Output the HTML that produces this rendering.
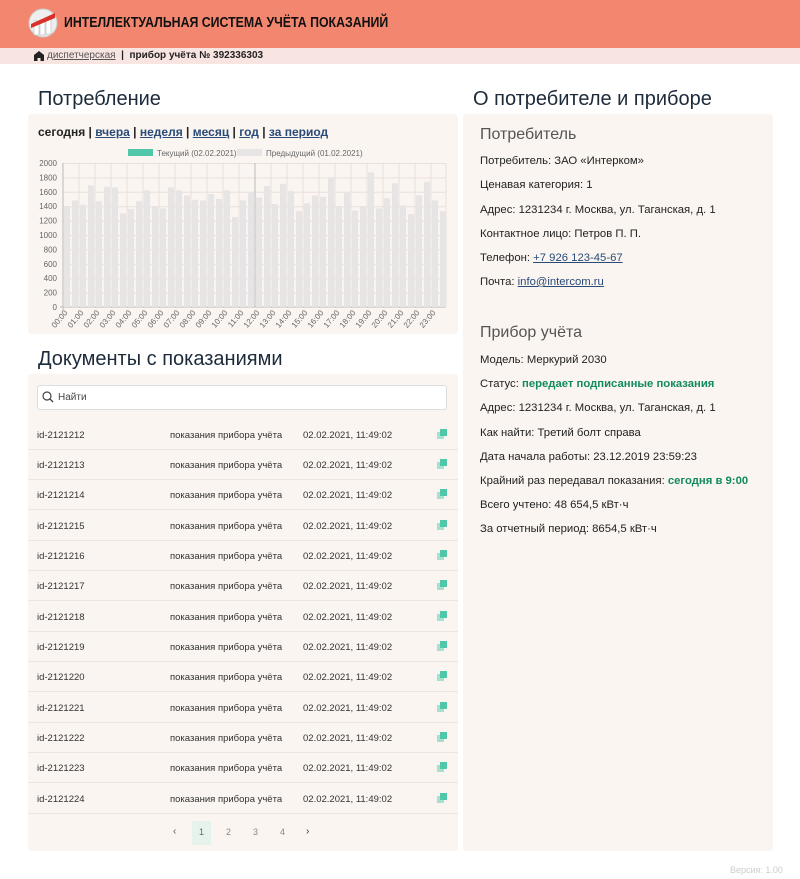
<!DOCTYPE html>
<html><head><meta charset="utf-8">
<style>
*{margin:0;padding:0;box-sizing:border-box}
body{width:800px;height:879px;background:#fff;font-family:"Liberation Sans",sans-serif;color:#222;position:relative;overflow:hidden}
.a{position:absolute;white-space:nowrap}
.hdr{left:0;top:0;width:800px;height:48px;background:#f2866e}
.bc{left:0;top:48px;width:800px;height:16px;background:#f8e4e0;font-size:10px}
.panel{background:#faf5f0;border-radius:3px}
h2{font-weight:normal;font-size:20px;color:#1c2a3a}
a{color:#2a4a78}
.row{left:28px;width:430px;height:30px;border-bottom:1px solid #ece6e0;font-size:9.5px;color:#333}
.row span{position:absolute;top:10px}
.ri{font-size:11.3px;left:480px;color:#222}
.g{color:#138a5e;font-weight:bold}
</style></head><body>
<div class="a hdr"></div>
<svg class="a" style="left:28px;top:8px" width="30" height="30" viewBox="0 0 30 30">
<circle cx="15" cy="15" r="14" fill="#eee" stroke="#ccc"/>
<rect x="6" y="13" width="5" height="14" fill="#fff" stroke="#bbb" stroke-width=".6"/>
<rect x="12" y="12" width="5" height="15" fill="#fff" stroke="#bbb" stroke-width=".6"/>
<rect x="18" y="11" width="5" height="15" fill="#fff" stroke="#bbb" stroke-width=".6"/>
<path d="M3 16 L27 5 L27 10 L3 20Z" fill="#d9302a"/>
</svg>
<div class="a" style="left:64px;top:15px;font-size:14.5px;font-weight:bold;color:#111;transform:scaleX(0.85);transform-origin:left">ИНТЕЛЛЕКТУАЛЬНАЯ СИСТЕМА УЧЁТА ПОКАЗАНИЙ</div>
<div class="a bc"></div>
<svg class="a" style="left:34px;top:51px" width="10" height="10" viewBox="0 0 10 10"><path d="M5 0L10 4V10H6.5V7H3.5V10H0V4Z" fill="#222"/></svg>
<div class="a" style="left:47px;top:50px;font-size:10px;color:#555"><span style="text-decoration:underline">диспетчерская</span> <b style="color:#222">&nbsp;|&nbsp; прибор учёта № 392336303</b></div>

<h2 class="a" style="left:38px;top:88px">Потребление</h2>
<h2 class="a" style="left:473px;top:88px">О потребителе и приборе</h2>

<div class="a panel" style="left:28px;top:114px;width:430px;height:220px"></div>
<div class="a" style="left:38px;top:125px;font-size:12px;font-weight:bold">сегодня | <a href="#">вчера</a> | <a href="#">неделя</a> | <a href="#">месяц</a> | <a href="#">год</a> | <a href="#">за период</a></div>

<svg class="a" style="left:28px;top:140px" width="430" height="195" viewBox="28 140 430 195" font-family="Liberation Sans" font-size="8" fill="#666">
<rect x="128" y="149" width="25" height="7" fill="#4fc7a8"/><text x="157" y="156">Текущий (02.02.2021)</text>
<rect x="237" y="149" width="25" height="7" fill="#e6e4e4"/><text x="266" y="156">Предыдущий (01.02.2021)</text>
<g stroke="#eadfdc" stroke-width="1">
<line x1="63" x2="446" y1="163.5" y2="163.5"/><line x1="63" x2="446" y1="177.9" y2="177.9"/><line x1="63" x2="446" y1="192.3" y2="192.3"/><line x1="63" x2="446" y1="206.7" y2="206.7"/><line x1="63" x2="446" y1="221.1" y2="221.1"/><line x1="63" x2="446" y1="235.5" y2="235.5"/><line x1="63" x2="446" y1="249.9" y2="249.9"/><line x1="63" x2="446" y1="264.3" y2="264.3"/><line x1="63" x2="446" y1="278.7" y2="278.7"/><line x1="63" x2="446" y1="293.1" y2="293.1"/>
<line x1="79" x2="79" y1="163" y2="307"/><line x1="95" x2="95" y1="163" y2="307"/><line x1="111" x2="111" y1="163" y2="307"/><line x1="127" x2="127" y1="163" y2="307"/><line x1="143" x2="143" y1="163" y2="307"/><line x1="159" x2="159" y1="163" y2="307"/><line x1="175" x2="175" y1="163" y2="307"/><line x1="191" x2="191" y1="163" y2="307"/><line x1="207" x2="207" y1="163" y2="307"/><line x1="223" x2="223" y1="163" y2="307"/><line x1="239" x2="239" y1="163" y2="307"/><line x1="271" x2="271" y1="163" y2="307"/><line x1="287" x2="287" y1="163" y2="307"/><line x1="303" x2="303" y1="163" y2="307"/><line x1="319" x2="319" y1="163" y2="307"/><line x1="335" x2="335" y1="163" y2="307"/><line x1="351" x2="351" y1="163" y2="307"/><line x1="367" x2="367" y1="163" y2="307"/><line x1="383" x2="383" y1="163" y2="307"/><line x1="399" x2="399" y1="163" y2="307"/><line x1="415" x2="415" y1="163" y2="307"/><line x1="431" x2="431" y1="163" y2="307"/><line x1="446" x2="446" y1="163" y2="307"/>
</g>
<line x1="255" x2="255" y1="163" y2="307" stroke="#bbb"/>
<line x1="63" x2="63" y1="163" y2="310" stroke="#bbb"/><line x1="60" x2="446" y1="307" y2="307" stroke="#bbb"/>
<g fill="#e6e4e4">
<rect x="64" y="206.2" width="6" height="100.8"/><rect x="72" y="200.4" width="6" height="106.6"/><rect x="80" y="204.8" width="6" height="102.2"/><rect x="88" y="185.3" width="6" height="121.7"/><rect x="96" y="201.2" width="6" height="105.8"/><rect x="104" y="186.8" width="6" height="120.2"/><rect x="112" y="187.5" width="6" height="119.5"/><rect x="120" y="213.4" width="6" height="93.6"/><rect x="128" y="209.1" width="6" height="97.9"/><rect x="136" y="201.2" width="6" height="105.8"/><rect x="144" y="190.4" width="6" height="116.6"/><rect x="152" y="206.2" width="6" height="100.8"/><rect x="160" y="208.4" width="6" height="98.6"/><rect x="168" y="187.5" width="6" height="119.5"/><rect x="176" y="190.4" width="6" height="116.6"/><rect x="184" y="195.4" width="6" height="111.6"/><rect x="192" y="199.7" width="6" height="107.3"/><rect x="200" y="200.4" width="6" height="106.6"/><rect x="208" y="194" width="6" height="113"/><rect x="216" y="199" width="6" height="108"/><rect x="224" y="190.4" width="6" height="116.6"/><rect x="232" y="217" width="6" height="90"/><rect x="240" y="200.4" width="6" height="106.6"/><rect x="248" y="191.8" width="6" height="115.2"/><rect x="256" y="197.6" width="6" height="109.4"/><rect x="264" y="186" width="6" height="121"/><rect x="272" y="204" width="6" height="103"/><rect x="280" y="183.9" width="6" height="123.1"/><rect x="288" y="191.1" width="6" height="115.9"/><rect x="296" y="211.2" width="6" height="95.8"/><rect x="304" y="203.3" width="6" height="103.7"/><rect x="312" y="195.4" width="6" height="111.6"/><rect x="320" y="196.8" width="6" height="110.2"/><rect x="328" y="177.4" width="6" height="129.6"/><rect x="336" y="206.2" width="6" height="100.8"/><rect x="344" y="191.8" width="6" height="115.2"/><rect x="352" y="210.5" width="6" height="96.5"/><rect x="360" y="206.9" width="6" height="100.1"/><rect x="368" y="172.4" width="6" height="134.6"/><rect x="376" y="208.4" width="6" height="98.6"/><rect x="384" y="198.3" width="6" height="108.7"/><rect x="392" y="183.2" width="6" height="123.8"/><rect x="400" y="205.5" width="6" height="101.5"/><rect x="408" y="214.1" width="6" height="92.9"/><rect x="416" y="195.4" width="6" height="111.6"/><rect x="424" y="181.7" width="6" height="125.3"/><rect x="432" y="200.4" width="6" height="106.6"/><rect x="440" y="211.2" width="6" height="95.8"/>
</g>
<g text-anchor="end">
<text x="57" y="166">2000</text><text x="57" y="180.4">1800</text><text x="57" y="194.8">1600</text><text x="57" y="209.2">1400</text><text x="57" y="223.6">1200</text><text x="57" y="238">1000</text><text x="57" y="252.4">800</text><text x="57" y="266.8">600</text><text x="57" y="281.2">400</text><text x="57" y="295.6">200</text><text x="57" y="310">0</text>
</g>
<g text-anchor="end">
<text transform="translate(68,313) rotate(-50)">00:00</text><text transform="translate(84,313) rotate(-50)">01:00</text><text transform="translate(100,313) rotate(-50)">02:00</text><text transform="translate(116,313) rotate(-50)">03:00</text><text transform="translate(132,313) rotate(-50)">04:00</text><text transform="translate(148,313) rotate(-50)">05:00</text><text transform="translate(164,313) rotate(-50)">06:00</text><text transform="translate(180,313) rotate(-50)">07:00</text><text transform="translate(196,313) rotate(-50)">08:00</text><text transform="translate(212,313) rotate(-50)">09:00</text><text transform="translate(228,313) rotate(-50)">10:00</text><text transform="translate(244,313) rotate(-50)">11:00</text><text transform="translate(260,313) rotate(-50)">12:00</text><text transform="translate(276,313) rotate(-50)">13:00</text><text transform="translate(292,313) rotate(-50)">14:00</text><text transform="translate(308,313) rotate(-50)">15:00</text><text transform="translate(324,313) rotate(-50)">16:00</text><text transform="translate(340,313) rotate(-50)">17:00</text><text transform="translate(356,313) rotate(-50)">18:00</text><text transform="translate(372,313) rotate(-50)">19:00</text><text transform="translate(388,313) rotate(-50)">20:00</text><text transform="translate(404,313) rotate(-50)">21:00</text><text transform="translate(420,313) rotate(-50)">22:00</text><text transform="translate(436,313) rotate(-50)">23:00</text>
</g>
</svg>

<h2 class="a" style="left:38px;top:348px">Документы с показаниями</h2>
<div class="a panel" style="left:28px;top:374px;width:430px;height:477px"></div>
<div class="a" style="left:37px;top:385px;width:410px;height:25px;background:#fff;border:1px solid #ddd;border-radius:3px"></div>
<svg class="a" style="left:42px;top:391px" width="12" height="12" viewBox="0 0 12 12"><circle cx="5" cy="5" r="4" fill="none" stroke="#444" stroke-width="1.2"/><path d="M8 8L11 11" stroke="#444" stroke-width="1.3"/></svg>
<div class="a" style="left:58px;top:392px;font-size:10px;color:#444">Найти</div>

<div class="a row" style="top:420px"><span style="left:9px">id-2121212</span><span style="left:142px">показания прибора учёта</span><span style="left:275px">02.02.2021, 11:49:02</span><span style="left:409px;top:9px;width:10px;height:10px"><i style="position:absolute;left:0;top:3px;width:7px;height:7px;background:#a8e0cf"></i><i style="position:absolute;left:3px;top:0;width:7px;height:7px;background:#4fc7a8"></i></span></div>
<div class="a row" style="top:450px"><span style="left:9px">id-2121213</span><span style="left:142px">показания прибора учёта</span><span style="left:275px">02.02.2021, 11:49:02</span><span style="left:409px;top:9px;width:10px;height:10px"><i style="position:absolute;left:0;top:3px;width:7px;height:7px;background:#a8e0cf"></i><i style="position:absolute;left:3px;top:0;width:7px;height:7px;background:#4fc7a8"></i></span></div>
<div class="a row" style="top:480px"><span style="left:9px">id-2121214</span><span style="left:142px">показания прибора учёта</span><span style="left:275px">02.02.2021, 11:49:02</span><span style="left:409px;top:9px;width:10px;height:10px"><i style="position:absolute;left:0;top:3px;width:7px;height:7px;background:#a8e0cf"></i><i style="position:absolute;left:3px;top:0;width:7px;height:7px;background:#4fc7a8"></i></span></div>
<div class="a row" style="top:511px"><span style="left:9px">id-2121215</span><span style="left:142px">показания прибора учёта</span><span style="left:275px">02.02.2021, 11:49:02</span><span style="left:409px;top:9px;width:10px;height:10px"><i style="position:absolute;left:0;top:3px;width:7px;height:7px;background:#a8e0cf"></i><i style="position:absolute;left:3px;top:0;width:7px;height:7px;background:#4fc7a8"></i></span></div>
<div class="a row" style="top:541px"><span style="left:9px">id-2121216</span><span style="left:142px">показания прибора учёта</span><span style="left:275px">02.02.2021, 11:49:02</span><span style="left:409px;top:9px;width:10px;height:10px"><i style="position:absolute;left:0;top:3px;width:7px;height:7px;background:#a8e0cf"></i><i style="position:absolute;left:3px;top:0;width:7px;height:7px;background:#4fc7a8"></i></span></div>
<div class="a row" style="top:571px"><span style="left:9px">id-2121217</span><span style="left:142px">показания прибора учёта</span><span style="left:275px">02.02.2021, 11:49:02</span><span style="left:409px;top:9px;width:10px;height:10px"><i style="position:absolute;left:0;top:3px;width:7px;height:7px;background:#a8e0cf"></i><i style="position:absolute;left:3px;top:0;width:7px;height:7px;background:#4fc7a8"></i></span></div>
<div class="a row" style="top:602px"><span style="left:9px">id-2121218</span><span style="left:142px">показания прибора учёта</span><span style="left:275px">02.02.2021, 11:49:02</span><span style="left:409px;top:9px;width:10px;height:10px"><i style="position:absolute;left:0;top:3px;width:7px;height:7px;background:#a8e0cf"></i><i style="position:absolute;left:3px;top:0;width:7px;height:7px;background:#4fc7a8"></i></span></div>
<div class="a row" style="top:632px"><span style="left:9px">id-2121219</span><span style="left:142px">показания прибора учёта</span><span style="left:275px">02.02.2021, 11:49:02</span><span style="left:409px;top:9px;width:10px;height:10px"><i style="position:absolute;left:0;top:3px;width:7px;height:7px;background:#a8e0cf"></i><i style="position:absolute;left:3px;top:0;width:7px;height:7px;background:#4fc7a8"></i></span></div>
<div class="a row" style="top:662px"><span style="left:9px">id-2121220</span><span style="left:142px">показания прибора учёта</span><span style="left:275px">02.02.2021, 11:49:02</span><span style="left:409px;top:9px;width:10px;height:10px"><i style="position:absolute;left:0;top:3px;width:7px;height:7px;background:#a8e0cf"></i><i style="position:absolute;left:3px;top:0;width:7px;height:7px;background:#4fc7a8"></i></span></div>
<div class="a row" style="top:693px"><span style="left:9px">id-2121221</span><span style="left:142px">показания прибора учёта</span><span style="left:275px">02.02.2021, 11:49:02</span><span style="left:409px;top:9px;width:10px;height:10px"><i style="position:absolute;left:0;top:3px;width:7px;height:7px;background:#a8e0cf"></i><i style="position:absolute;left:3px;top:0;width:7px;height:7px;background:#4fc7a8"></i></span></div>
<div class="a row" style="top:723px"><span style="left:9px">id-2121222</span><span style="left:142px">показания прибора учёта</span><span style="left:275px">02.02.2021, 11:49:02</span><span style="left:409px;top:9px;width:10px;height:10px"><i style="position:absolute;left:0;top:3px;width:7px;height:7px;background:#a8e0cf"></i><i style="position:absolute;left:3px;top:0;width:7px;height:7px;background:#4fc7a8"></i></span></div>
<div class="a row" style="top:753px"><span style="left:9px">id-2121223</span><span style="left:142px">показания прибора учёта</span><span style="left:275px">02.02.2021, 11:49:02</span><span style="left:409px;top:9px;width:10px;height:10px"><i style="position:absolute;left:0;top:3px;width:7px;height:7px;background:#a8e0cf"></i><i style="position:absolute;left:3px;top:0;width:7px;height:7px;background:#4fc7a8"></i></span></div>
<div class="a row" style="top:784px"><span style="left:9px">id-2121224</span><span style="left:142px">показания прибора учёта</span><span style="left:275px">02.02.2021, 11:49:02</span><span style="left:409px;top:9px;width:10px;height:10px"><i style="position:absolute;left:0;top:3px;width:7px;height:7px;background:#a8e0cf"></i><i style="position:absolute;left:3px;top:0;width:7px;height:7px;background:#4fc7a8"></i></span></div>

<div class="a" style="left:192px;top:821px;width:19px;height:24px;background:#e6f2ec"></div>
<div class="a" style="left:173px;top:826px;font-size:10px;color:#555">&lsaquo;</div>
<div class="a" style="left:199px;top:827px;font-size:9px;color:#666">1</div>
<div class="a" style="left:226px;top:827px;font-size:9px;color:#888">2</div>
<div class="a" style="left:253px;top:827px;font-size:9px;color:#888">3</div>
<div class="a" style="left:280px;top:827px;font-size:9px;color:#888">4</div>
<div class="a" style="left:306px;top:826px;font-size:10px;color:#333">&rsaquo;</div>

<div class="a panel" style="left:463px;top:114px;width:310px;height:737px"></div>
<div class="a" style="left:480px;top:126px;font-size:16px;color:#555">Потребитель</div>
<div class="a ri" style="top:155px">Потребитель: ЗАО «Интерком»</div>
<div class="a ri" style="top:179px">Ценавая категория: 1</div>
<div class="a ri" style="top:204px">Адрес: 1231234 г. Москва, ул. Таганская, д. 1</div>
<div class="a ri" style="top:228px">Контактное лицо: Петров П. П.</div>
<div class="a ri" style="top:252px">Телефон: <a href="#">+7 926 123-45-67</a></div>
<div class="a ri" style="top:276px">Почта: <a href="#">info@intercom.ru</a></div>
<div class="a" style="left:480px;top:324px;font-size:16px;color:#555">Прибор учёта</div>
<div class="a ri" style="top:354px">Модель: Меркурий 2030</div>
<div class="a ri" style="top:378px">Статус: <span class="g">передает подписанные показания</span></div>
<div class="a ri" style="top:402px">Адрес: 1231234 г. Москва, ул. Таганская, д. 1</div>
<div class="a ri" style="top:427px">Как найти: Третий болт справа</div>
<div class="a ri" style="top:451px">Дата начала работы: 23.12.2019 23:59:23</div>
<div class="a ri" style="top:475px">Крайний раз передавал показания: <span class="g">сегодня в 9:00</span></div>
<div class="a ri" style="top:499px">Всего учтено: 48 654,5 кВт·ч</div>
<div class="a ri" style="top:523px">За отчетный период: 8654,5 кВт·ч</div>

<div class="a" style="left:730px;top:865px;font-size:9px;color:#ccc">Версия: 1.00</div>
</body></html>
